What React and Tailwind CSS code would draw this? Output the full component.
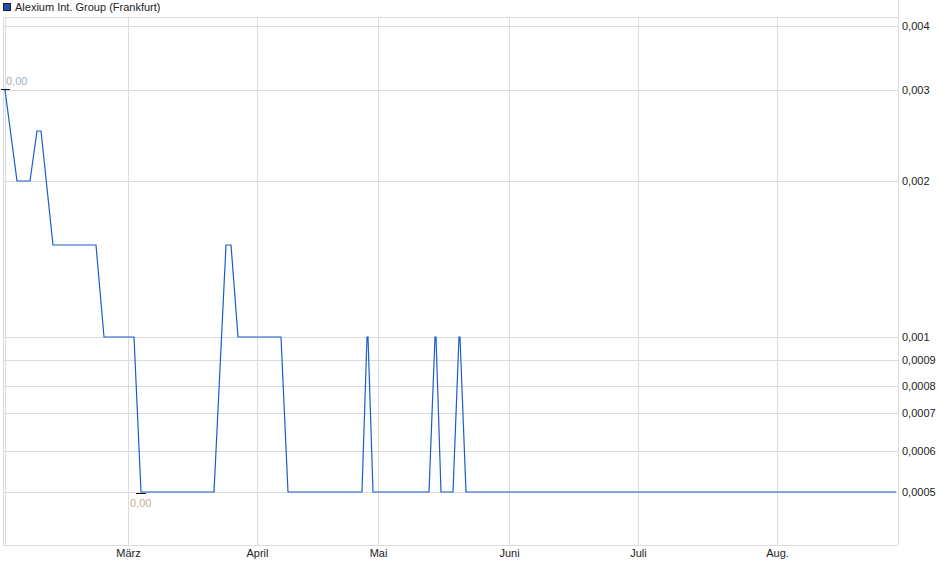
export default function App() {
  const pts = [[5,90],[17,181],[30,181],[37,131],[41,131],[53,245],[96,245],[104,337],[134,337],[141,492],[214,492],[226,245],[231,245],[238,337],[281,337],[288,492],[362,492],[367,337],[368,337],[373,492],[429,492],[435,337],[436,337],[441,492],[453,492],[459,337],[460,337],[466,492],[896,492]];
  const hs = [[17,null],[26,"0,004"],[90,"0,003"],[181,"0,002"],[337,"0,001"],[360,"0,0009"],[386,"0,0008"],[413,"0,0007"],[451,"0,0006"],[492,"0,0005"]];
  const vs = [[128,"März"],[257,"April"],[378,"Mai"],[509,"Juni"],[638,"Juli"],[777,"Aug."]];
  return (
    <div className="w-[940px] h-[579px] bg-white" style={{fontFamily:"'Liberation Sans', Arial, sans-serif"}}>
      <svg width="940" height="579" className="block" fontFamily="'Liberation Sans', Arial, sans-serif">
        <rect x="3.5" y="3.5" width="7" height="7" fill="#1f4fb0" stroke="#222" strokeWidth="1" />
        <text x="15" y="10.5" fontSize="11" fill="#222">Alexium Int. Group (Frankfurt)</text>
        {hs.map(([y,l])=>(
          <g key={y}>
            <line x1="3" x2="898" y1={y+0.5} y2={y+0.5} stroke="#dcdcdc" />
            {l && <text x="902" y={y+4} fontSize="11" fill="#222">{l}</text>}
          </g>
        ))}
        {vs.map(([x,l])=>(
          <g key={x}>
            <line x1={x+0.5} x2={x+0.5} y1="17" y2="545" stroke="#dcdcdc" />
            <text x={x+0.5} y="557" fontSize="11" fill="#222" textAnchor="middle">{l}</text>
          </g>
        ))}
        <line x1="3.5" x2="3.5" y1="17" y2="545" stroke="#dcdcdc" />
        <line x1="5.5" x2="5.5" y1="17" y2="545" stroke="#dcdcdc" />
        <line x1="898.5" x2="898.5" y1="0" y2="545" stroke="#dcdcdc" />
        <line x1="3" x2="898" y1="545.5" y2="545.5" stroke="#dcdcdc" />
        <polyline points={pts.map(p=>p.join(",")).join(" ")} fill="none" stroke="#1a5ccc" strokeWidth="1.2" />
        <line x1="1" x2="10" y1="89.5" y2="89.5" stroke="#111" />
        <line x1="136" x2="146" y1="493.5" y2="493.5" stroke="#111" />
        <text x="6" y="85" fontSize="11" fill="#a0b0c8">0,00</text>
        <text x="130" y="507" fontSize="11" fill="#c8b090">0,00</text>
      </svg>
    </div>
  );
}
